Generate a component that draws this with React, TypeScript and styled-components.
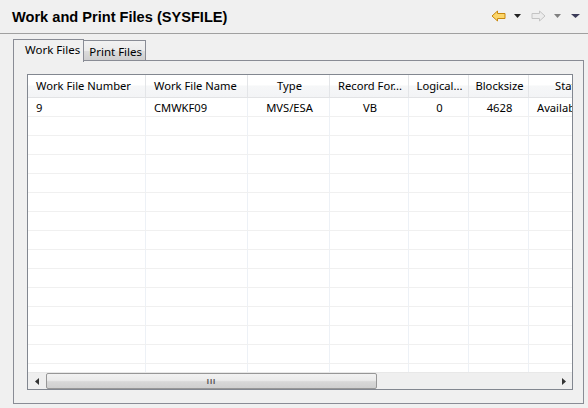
import React from "react";
import styled, { createGlobalStyle } from "styled-components";

const Global = createGlobalStyle`
  html, body { margin: 0; padding: 0; background: #f0f0f0; }
  body { width: 588px; height: 408px; overflow: hidden; }
  * { box-sizing: border-box; }
`;

const Page = styled.div`
  width: 588px;
  height: 408px;
  background: #f0f0f0;
  display: flex;
  flex-direction: column;
  font-family: "Noto Sans", "Open Sans", sans-serif;
`;

const TitleBar = styled.div`
  flex: 0 0 34px;
  height: 34px;
  border-bottom: 1px solid #a0a0a0;
  display: flex;
  align-items: center;
  padding: 0 8px 0 12px;
`;

const Title = styled.div`
  font-family: "Liberation Sans", Arial, sans-serif;
  font-weight: bold;
  font-size: 14.6px;
  color: #000;
  flex: 1;
  padding-top: 1px;
`;

const Tools = styled.div`
  display: flex;
  align-items: center;
  padding-bottom: 1px;
`;

const ToolIcon = styled.span<{ $ml?: number }>`
  display: inline-flex;
  margin-left: ${(p) => p.$ml ?? 0}px;
`;

const Folder = styled.div`
  margin: 5px 4px 4px 13px;
  flex: 1;
  min-height: 0;
  display: flex;
  flex-direction: column;
`;

const TabStrip = styled.div`
  display: flex;
  align-items: flex-end;
  flex: 0 0 22px;
  height: 22px;
`;

const Tab = styled.div<{ $active?: boolean }>`
  height: ${(p) => (p.$active ? 23 : 21)}px;
  margin-bottom: ${(p) => (p.$active ? -1 : 0)}px;
  border: 1px solid #898c95;
  border-bottom: ${(p) => (p.$active ? "none" : "1px solid #898c95")};
  border-left: ${(p) => (p.$active ? "1px solid #898c95" : "none")};
  background: ${(p) =>
    p.$active ? "#f0f0f0" : "linear-gradient(#f2f2f2, #ebebeb 50%, #dcdcdc 51%, #cfcfcf)"};
  font-size: 11.5px;
  color: #000;
  display: flex;
  align-items: ${(p) => (p.$active ? "flex-start" : "center")};
  padding: ${(p) => (p.$active ? "2px 3px 0 11px" : "1px 3px 0 5px")};
  position: relative;
  z-index: ${(p) => (p.$active ? 1 : 0)};
`;

const TabFill = styled.div`
  flex: 1;
  height: 1px;
  background: #898c95;
`;

const Panel = styled.div`
  flex: 1;
  min-height: 0;
  border: 1px solid #898c95;
  border-top: none;
  padding: 13px 10px 13px 13px;
  display: flex;
`;

const TableBox = styled.div`
  flex: 1;
  min-height: 0;
  border: 1px solid #828790;
  background: #fff;
  display: flex;
  flex-direction: column;
  overflow: hidden;
`;

const Grid = styled.div`
  flex: 1;
  min-height: 0;
  overflow: hidden;
`;

const cols = [118, 102, 82, 79, 60, 60, 84];

const HeaderRow = styled.div`
  display: flex;
  height: 23px;
  background: linear-gradient(#ffffff, #ffffff 45%, #f6f7f8 50%, #f3f4f6);
  border-bottom: 1px solid #e2e3e5;
`;

const HeadCell = styled.div<{ $w: number; $align: string }>`
  flex: 0 0 ${(p) => p.$w}px;
  width: ${(p) => p.$w}px;
  border-right: 1px solid #e3e5e8;
  font-size: 11.2px;
  color: #000;
  display: flex;
  align-items: center;
  justify-content: ${(p) => p.$align};
  padding: 0 6px 1px 8px;
  white-space: nowrap;
  overflow: hidden;
`;

const Row = styled.div`
  display: flex;
  height: 19px;
  border-bottom: 1px solid #f0f0f0;
`;

const Cell = styled.div<{ $w: number; $align: string }>`
  flex: 0 0 ${(p) => p.$w}px;
  width: ${(p) => p.$w}px;
  border-right: 1px solid #edf1f6;
  font-size: 11.2px;
  color: #000;
  display: flex;
  align-items: center;
  justify-content: ${(p) => p.$align};
  padding: 0 6px 0 8px;
  white-space: nowrap;
  overflow: hidden;
`;

const ScrollBar = styled.div`
  flex: 0 0 17px;
  height: 17px;
  display: flex;
  align-items: stretch;
  background: #efefef;
  border-top: 1px solid #e8e8e8;
`;

const ScrollBtn = styled.div`
  width: 17px;
  display: flex;
  align-items: center;
  justify-content: center;
`;

const Thumb = styled.div`
  width: 331px;
  margin: 0 0 0 1px;
  border: 1px solid #979797;
  border-radius: 2px;
  background: linear-gradient(#f2f2f2, #ebebeb 45%, #d8d8d8 55%, #cfcfcf);
  display: flex;
  align-items: center;
  justify-content: center;
  font-family: "Liberation Sans", Arial, sans-serif;
  font-size: 8px;
  font-weight: bold;
  letter-spacing: 1px;
  color: #555;
`;

const Track = styled.div`
  flex: 1;
`;

const headers: [string, string][] = [
  ["Work File Number", "flex-start"],
  ["Work File Name", "flex-start"],
  ["Type", "center"],
  ["Record For...", "center"],
  ["Logical...", "center"],
  ["Blocksize", "center"],
  ["Status", "center"],
];

const data: [string, string][] = [
  ["9", "flex-start"],
  ["CMWKF09", "flex-start"],
  ["MVS/ESA", "center"],
  ["VB", "center"],
  ["0", "center"],
  ["4628", "center"],
  ["Available", "flex-start"],
];

const BackArrow = () => (
  <svg width="15" height="12" viewBox="0 0 15 12">
    <path d="M1 6 L6.5 1 L6.5 3.5 L14 3.5 L14 8.5 L6.5 8.5 L6.5 11 Z" fill="#fcd66a" stroke="#c8880e" strokeWidth="1" />
  </svg>
);

const FwdArrow = () => (
  <svg width="15" height="12" viewBox="0 0 15 12">
    <path d="M14 6 L8.5 1 L8.5 3.5 L1 3.5 L1 8.5 L8.5 8.5 L8.5 11 Z" fill="#ececec" stroke="#c4c4c4" strokeWidth="1" />
  </svg>
);

const Tri = ({ color, w = 7 }: { color: string; w?: number }) => (
  <svg width={w} height="4" viewBox={`0 0 ${w} 4`}>
    <path d={`M0 0 L${w} 0 L${w / 2} 4 Z`} fill={color} />
  </svg>
);

const LeftArrowSmall = () => (
  <svg width="4" height="7" viewBox="0 0 4 7">
    <path d="M4 0 L0 3.5 L4 7 Z" fill="#333" />
  </svg>
);

const RightArrowSmall = () => (
  <svg width="4" height="7" viewBox="0 0 4 7">
    <path d="M0 0 L4 3.5 L0 7 Z" fill="#333" />
  </svg>
);

export default function App() {
  const emptyRows = Array.from({ length: 14 });
  return (
    <Page>
      <Global />
      <TitleBar>
        <Title>Work and Print Files (SYSFILE)</Title>
        <Tools>
          <BackArrow />
          <ToolIcon $ml={8}><Tri color="#222" /></ToolIcon>
          <ToolIcon $ml={10}><FwdArrow /></ToolIcon>
          <ToolIcon $ml={8}><Tri color="#808080" /></ToolIcon>
          <ToolIcon $ml={10}><Tri color="#3b3b58" w={9} /></ToolIcon>
        </Tools>
      </TitleBar>
      <Folder>
        <TabStrip>
          <Tab $active>Work Files</Tab>
          <Tab>Print Files</Tab>
          <TabFill />
        </TabStrip>
        <Panel>
          <TableBox>
            <Grid>
              <HeaderRow>
                {headers.map(([h, a], i) => (
                  <HeadCell key={h} $w={cols[i]} $align={a}>{h}</HeadCell>
                ))}
              </HeaderRow>
              <Row>
                {data.map(([d, a], i) => (
                  <Cell key={i} $w={cols[i]} $align={a}>{d}</Cell>
                ))}
              </Row>
              {emptyRows.map((_, r) => (
                <Row key={r}>
                  {cols.map((w, i) => (
                    <Cell key={i} $w={w} $align="flex-start" />
                  ))}
                </Row>
              ))}
            </Grid>
            <ScrollBar>
              <ScrollBtn><LeftArrowSmall /></ScrollBtn>
              <Thumb>III</Thumb>
              <Track />
              <ScrollBtn><RightArrowSmall /></ScrollBtn>
            </ScrollBar>
          </TableBox>
        </Panel>
      </Folder>
    </Page>
  );
}
